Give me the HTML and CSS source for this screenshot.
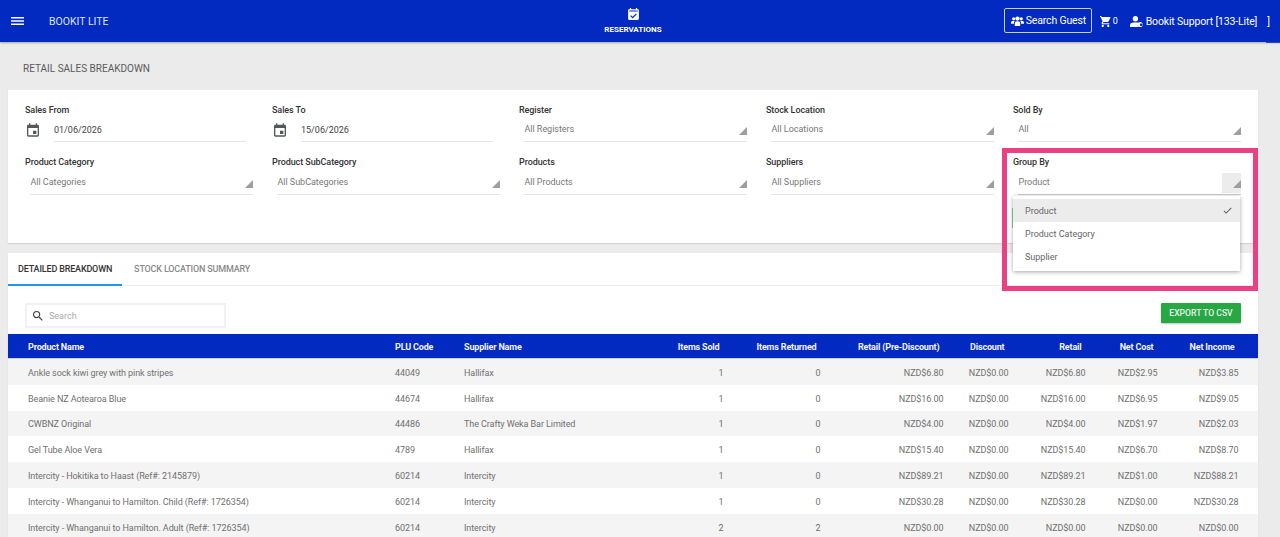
FILE: index.html
```html
<!DOCTYPE html>
<html>
    <head>
        <title>Retail Sales Breakdown - Bookit Lite</title>
        <link rel="stylesheet" href="styles.css">
    </head>

    <body>
        <div class="topBar">
            <div class="topLeft">
                <svg class="menuIcon" viewBox="0 0 13 8"><path d="M0 0h13v1.4H0zM0 3.3h13v1.4H0zM0 6.6h13V8H0z"/></svg>
                <span class="brand">BOOKIT LITE</span>
            </div>
            <div class="topCentre">
                <svg class="resIcon" viewBox="3 1 18 20"><path d="M19 3h-1V1h-2v2H8V1H6v2H5c-1.1 0-2 .9-2 2v14c0 1.1.9 2 2 2h14c1.1 0 2-.9 2-2V5c0-1.1-.9-2-2-2zm0 4H5V5h14zm-8.500 11.500l-4-4 1.400-1.400 2.600 2.600 5.600-5.600 1.400 1.400z"/></svg>
                <span>RESERVATIONS</span>
            </div>
            <div class="topRight">
                <div class="guestBtn">
                    <svg class="usersIcon" viewBox="0 0 24 18"><circle cx="5" cy="5" r="3"/><circle cx="19" cy="5" r="3"/><circle cx="12" cy="4.5" r="4"/><path d="M0 14v-2c0-2 1.500-3 3-3h4c-1 1-1.500 2-1.500 5zM24 14v-2c0-2-1.500-3-3-3h-4c1 1 1.500 2 1.500 5zM7 18v-4c0-3 2-4.500 4-4.500h2c2 0 4 1.500 4 4.500v4z"/></svg>
                    Search Guest
                </div>
                <svg class="cartIcon" viewBox="2 2 20 20"><path d="M7 18c-1.100 0-1.990.9-1.990 2S5.900 22 7 22s2-.9 2-2-.9-2-2-2zM1 2v2h2l3.600 7.590-1.350 2.450c-.16.280-.25.610-.25.960 0 1.100.9 2 2 2h12v-2H7.420c-.14 0-.25-.11-.25-.25l.03-.12.900-1.630h7.450c.75 0 1.410-.41 1.750-1.030l3.580-6.490A1 1 0 0 0 20 4H5.210l-.94-2zm16 16c-1.100 0-1.990.9-1.990 2s.89 2 1.990 2 2-.9 2-2-.9-2-2-2z"/></svg>
                <span class="cartCount">0</span>
                <svg class="userIcon" viewBox="0 0 26 20"><circle cx="10" cy="5" r="5"/><path d="M0 20v-3c0-3 3-5 6-5h8c1 0 2 .2 3 .7-1.500 1.200-2.500 3-2.500 4.800 0 .9.200 1.700.5 2.500z"/><path d="M21 11.500a5 5 0 1 0 0 8.900 5 5 0 0 0 0-8.900zm-1 2.200a2.400 2.400 0 1 1 0 4.600 2.400 2.400 0 0 1 0-4.600z"/></svg>
                <span class="userName">Bookit Support [133-Lite]</span>
                <span class="stray">]</span>
            </div>
        </div>

        <div class="pageTitle">RETAIL SALES BREAKDOWN</div>

        <div class="card filters">
            <div class="filterGrid">
                <div class="field">
                    <label>Sales From</label>
                    <div class="dateRow">
                        <svg class="calIcon" viewBox="3 1 18 20"><path d="M17 12h-5v5h5zM16 1v2H8V1H6v2H5c-1.110 0-1.990.9-1.990 2L3 19c0 1.100.89 2 2 2h14c1.100 0 2-.9 2-2V5c0-1.100-.9-2-2-2h-1V1zm3 18H5V8h14z"/></svg>
                        <div class="dateInput">01/06/2026</div>
                    </div>
                </div>
                <div class="field">
                    <label>Sales To</label>
                    <div class="dateRow">
                        <svg class="calIcon" viewBox="3 1 18 20"><path d="M17 12h-5v5h5zM16 1v2H8V1H6v2H5c-1.110 0-1.990.9-1.990 2L3 19c0 1.100.89 2 2 2h14c1.100 0 2-.9 2-2V5c0-1.100-.9-2-2-2h-1V1zm3 18H5V8h14z"/></svg>
                        <div class="dateInput">15/06/2026</div>
                    </div>
                </div>
                <div class="field">
                    <label>Register</label>
                    <div class="select">All Registers<i class="arrow"></i></div>
                </div>
                <div class="field">
                    <label>Stock Location</label>
                    <div class="select">All Locations<i class="arrow"></i></div>
                </div>
                <div class="field">
                    <label>Sold By</label>
                    <div class="select">All<i class="arrow"></i></div>
                </div>
                <div class="field">
                    <label>Product Category</label>
                    <div class="select">All Categories<i class="arrow"></i></div>
                </div>
                <div class="field">
                    <label>Product SubCategory</label>
                    <div class="select">All SubCategories<i class="arrow"></i></div>
                </div>
                <div class="field">
                    <label>Products</label>
                    <div class="select">All Products<i class="arrow"></i></div>
                </div>
                <div class="field">
                    <label>Suppliers</label>
                    <div class="select">All Suppliers<i class="arrow"></i></div>
                </div>
                <div class="field groupBy">
                    <label>Group By</label>
                    <div class="select open">Product<b class="arrowBack"></b><i class="arrow"></i></div>
                    <div class="dropMenu">
                        <div class="dropItem selected">Product
                            <svg class="checkIcon" viewBox="0 0 24 24"><path d="M9 16.170L4.830 12l-1.420 1.410L9 19 21 7l-1.410-1.410z"/></svg>
                        </div>
                        <div class="dropItem">Product Category</div>
                        <div class="dropItem">Supplier</div>
                    </div>
                </div>
            </div>
            <div class="filterActions"><button class="runBtn"></button></div>
        </div>

        <div class="card results">
            <div class="tabs">
                <div class="tab active">DETAILED BREAKDOWN</div>
                <div class="tab">STOCK LOCATION SUMMARY</div>
            </div>
            <div class="toolRow">
                <div class="searchBox">
                    <svg class="searchIcon" viewBox="3 3 18 18"><path d="M15.500 14h-.79l-.28-.27A6.470 6.470 0 0 0 16 9.500 6.500 6.500 0 1 0 9.500 16c1.610 0 3.090-.59 4.230-1.570l.27.28v.79l5 4.990L20.490 19zm-6 0C7.010 14 5 11.990 5 9.500S7.010 5 9.500 5 14 7.010 14 9.500 11.990 14 9.500 14z"/></svg>
                    Search
                </div>
                <button class="exportBtn">EXPORT TO CSV</button>
            </div>
            <table class="salesTable">
                <colgroup>
                    <col class="colName"><col class="colPlu"><col class="colSupplier"><col class="colSold"><col class="colReturned">
                    <col class="colPre"><col class="colDiscount"><col class="colRetail"><col class="colCost"><col class="colIncome">
                </colgroup>
                <thead>
                    <tr>
                        <th>Product Name</th><th>PLU Code</th><th>Supplier Name</th>
                        <th class="num">Items Sold</th><th class="num">Items Returned</th><th class="num">Retail (Pre-Discount)</th>
                        <th class="num">Discount</th><th class="num">Retail</th><th class="num">Net Cost</th><th class="num">Net Income</th>
                    </tr>
                </thead>
                <tbody>
                    <tr>
                        <td>Ankle sock kiwi grey with pink stripes</td><td>44049</td><td>Hallifax</td>
                        <td class="num">1</td><td class="num">0</td><td class="num">NZD$6.80</td><td class="num">NZD$0.00</td><td class="num">NZD$6.80</td><td class="num">NZD$2.95</td><td class="num">NZD$3.85</td>
                    </tr>
                    <tr>
                        <td>Beanie NZ Aotearoa Blue</td><td>44674</td><td>Hallifax</td>
                        <td class="num">1</td><td class="num">0</td><td class="num">NZD$16.00</td><td class="num">NZD$0.00</td><td class="num">NZD$16.00</td><td class="num">NZD$6.95</td><td class="num">NZD$9.05</td>
                    </tr>
                    <tr>
                        <td>CWBNZ Original</td><td>44486</td><td>The Crafty Weka Bar Limited</td>
                        <td class="num">1</td><td class="num">0</td><td class="num">NZD$4.00</td><td class="num">NZD$0.00</td><td class="num">NZD$4.00</td><td class="num">NZD$1.97</td><td class="num">NZD$2.03</td>
                    </tr>
                    <tr>
                        <td>Gel Tube Aloe Vera</td><td>4789</td><td>Hallifax</td>
                        <td class="num">1</td><td class="num">0</td><td class="num">NZD$15.40</td><td class="num">NZD$0.00</td><td class="num">NZD$15.40</td><td class="num">NZD$6.70</td><td class="num">NZD$8.70</td>
                    </tr>
                    <tr>
                        <td>Intercity - Hokitika to Haast (Ref#: 2145879)</td><td>60214</td><td>Intercity</td>
                        <td class="num">1</td><td class="num">0</td><td class="num">NZD$89.21</td><td class="num">NZD$0.00</td><td class="num">NZD$89.21</td><td class="num">NZD$1.00</td><td class="num">NZD$88.21</td>
                    </tr>
                    <tr>
                        <td>Intercity - Whanganui to Hamilton. Child (Ref#: 1726354)</td><td>60214</td><td>Intercity</td>
                        <td class="num">1</td><td class="num">0</td><td class="num">NZD$30.28</td><td class="num">NZD$0.00</td><td class="num">NZD$30.28</td><td class="num">NZD$0.00</td><td class="num">NZD$30.28</td>
                    </tr>
                    <tr>
                        <td>Intercity - Whanganui to Hamilton. Adult (Ref#: 1726354)</td><td>60214</td><td>Intercity</td>
                        <td class="num">2</td><td class="num">2</td><td class="num">NZD$0.00</td><td class="num">NZD$0.00</td><td class="num">NZD$0.00</td><td class="num">NZD$0.00</td><td class="num">NZD$0.00</td>
                    </tr>
                </tbody>
            </table>
        </div>

        <div class="highlightBox"></div>
    </body>
</html>
```

FILE: styles.css
```css
html, body {
    height: 100%;
    overflow: hidden;
}

body {
    margin: 0;
    position: relative;
    background-color: #ebebeb;
    font-family: Roboto, "Liberation Sans", sans-serif;
    color: #666666;
}

/* top bar */
.topBar {
    display: flex;
    align-items: center;
    position: relative;
    height: 42px;
    background-color: #0229c0;
    color: #ffffff;
    box-shadow: 0 1px 2px rgba(0, 0, 0, 0.3);
}

.topBar::after {
    content: "";
    position: absolute;
    right: 0;
    bottom: -1px;
    width: 14px;
    height: 1px;
    background-color: #2a48c0;
}

.topLeft {
    display: flex;
    align-items: center;
    flex: 1;
    padding-left: 11px;
}

.menuIcon {
    width: 13px;
    height: 8px;
    fill: #ffffff;
}

.brand {
    margin-left: 25px;
    font-size: 10.5px;
    color: #dfe5fb;
}

.topCentre {
    position: absolute;
    left: 604px;
    top: 8px;
    width: 58px;
    display: flex;
    flex-direction: column;
    align-items: center;
    font-size: 8px;
    font-weight: 700;
    white-space: nowrap;
}

.resIcon {
    width: 11px;
    height: 12px;
    margin-bottom: 4.5px;
    fill: #ffffff;
}

.topRight {
    display: flex;
    align-items: center;
    font-size: 10.5px;
}

.guestBtn {
    display: flex;
    align-items: center;
    width: 88px;
    height: 25px;
    box-sizing: border-box;
    margin-top: -1px;
    padding-left: 6px;
    border: 1px solid #c4cdf3;
    border-radius: 2px;
    letter-spacing: -0.15px;
    white-space: nowrap;
}

.usersIcon {
    width: 13px;
    height: 10px;
    margin-right: 2px;
    fill: #ffffff;
}

.cartIcon {
    width: 11px;
    height: 11px;
    margin-left: 8px;
    fill: #ffffff;
}

.cartCount {
    margin-left: 2px;
    font-size: 9px;
}

.userIcon {
    width: 14px;
    height: 11px;
    margin-left: 12px;
    fill: #ffffff;
}

.userName {
    margin-left: 2px;
    letter-spacing: -0.16px;
    white-space: nowrap;
}

.stray {
    margin-left: 10px;
    margin-right: 10px;
}

.pageTitle {
    padding: 21px 0 0 23px;
    height: 27px;
    font-size: 10px;
    line-height: 12px;
    color: #5a5a5a;
}

/* cards */
.card {
    margin: 0 22px 10px 8px;
    background-color: #ffffff;
    box-shadow: 0 1px 1px rgba(0, 0, 0, 0.1);
}

.filters {
    height: 153px;
    box-sizing: border-box;
    padding: 14px 17px 0 17px;
}

.filterGrid {
    display: grid;
    grid-template-columns: repeat(5, 247px);
    grid-auto-rows: 52px;
}

.field {
    position: relative;
}

.field label {
    display: block;
    height: 14px;
    font-size: 9px;
    font-weight: 500;
    line-height: 12px;
    letter-spacing: -0.08px;
    color: #333333;
}

/* second row sits a pixel lower under its label */
.field:nth-child(n+6) label {
    height: 15px;
}

.dateRow {
    display: flex;
    align-items: center;
}

.calIcon {
    width: 12px;
    height: 14px;
    margin: 0 15px 0 2px;
    fill: #55585c;
}

.dateInput {
    width: 192px;
    height: 24px;
    box-sizing: border-box;
    padding-top: 7px;
    border-bottom: 1px solid #e6e6e6;
    font-size: 9px;
    color: #444444;
}

.select {
    position: relative;
    width: 223px;
    height: 24px;
    box-sizing: border-box;
    margin-left: 5px;
    padding: 6px 0 0 0.5px;
    border-bottom: 1px solid #e6e6e6;
    font-size: 9px;
    letter-spacing: -0.03px;
    color: #777777;
}

.arrow {
    position: absolute;
    right: 0;
    bottom: 6px;
    width: 8px;
    height: 8px;
    background-color: #9e9e9e;
    clip-path: polygon(100% 0, 100% 100%, 0 100%);
}

.select.open {
    border-bottom-color: #cccccc;
}

.arrowBack {
    position: absolute;
    right: 0;
    bottom: 1px;
    width: 19px;
    height: 20px;
    background-color: #ececec;
}

.dropMenu {
    position: absolute;
    left: 0;
    top: 40px;
    z-index: 3;
    width: 226.5px;
    padding: 3px 0;
    background-color: #ffffff;
    box-shadow: 0 1px 4px rgba(0, 0, 0, 0.35);
}

.dropItem {
    display: flex;
    align-items: center;
    justify-content: space-between;
    height: 23px;
    padding: 0 7px 0 12px;
    font-size: 9px;
    color: #666666;
}

.dropItem.selected {
    background-color: #ececec;
}

.checkIcon {
    width: 11px;
    height: 11px;
    fill: #555555;
}

.filterActions {
    display: flex;
    justify-content: flex-end;
    padding-right: 2px;
}

.runBtn {
    width: 227px;
    height: 20px;
    padding: 0;
    border: none;
    background-color: #8fcf9f;
}

/* results */
.tabs {
    display: flex;
    height: 32px;
    border-bottom: 1px solid #ededed;
}

.tab {
    padding: 0 10px;
    height: 32px;
    box-sizing: border-box;
    margin-right: 2px;
    font-size: 9px;
    font-weight: 500;
    line-height: 33px;
    letter-spacing: -0.17px;
    color: #8a8a8a;
}

.tab.active {
    border-bottom: 2px solid #2196f3;
    height: 33px;
    color: #333333;
}

.toolRow {
    display: flex;
    justify-content: space-between;
    align-items: flex-start;
    height: 48px;
    box-sizing: border-box;
    padding: 17px 17px 0 16.5px;
}

.searchBox {
    display: flex;
    align-items: center;
    width: 201px;
    height: 25px;
    box-sizing: border-box;
    padding-left: 6px;
    border: 2px solid #f1f1f1;
    font-size: 9px;
    color: #aaaaaa;
}

.searchIcon {
    width: 10px;
    height: 10px;
    margin-right: 6.5px;
    fill: #444444;
}

.exportBtn {
    width: 80px;
    height: 20px;
    padding: 0;
    border: none;
    border-radius: 1px;
    background-color: #28a745;
    box-shadow: 0 1px 2px rgba(0, 0, 0, 0.25);
    font-family: Roboto, "Liberation Sans", sans-serif;
    font-size: 8.6px;
    font-weight: 500;
    color: #e6f6ea;
}

.salesTable {
    width: 1250px;
    table-layout: fixed;
    border-collapse: collapse;
    font-size: 9px;
}

.colName { width: 367px; }
.colPlu { width: 69px; }
.colSupplier { width: 200px; }
.colSold { width: 99px; }
.colReturned { width: 97px; }
.colPre { width: 123px; }
.colDiscount { width: 65px; }
.colRetail { width: 77px; }
.colCost { width: 72px; }
.colIncome { width: 81px; }

.salesTable th {
    height: 22px;
    padding: 2px 0 0 20px;
    background-color: #0229c0;
    border-bottom: 1px solid #c9d2f2;
    font-weight: 700;
    letter-spacing: -0.16px;
    text-align: left;
    color: #f2f4fd;
    white-space: nowrap;
}

.salesTable td {
    height: 23.8px;
    padding: 2px 0 0 20px;
    letter-spacing: -0.08px;
    color: #707070;
    white-space: nowrap;
}

.salesTable th.num {
    padding: 2px 23.5px 0 0;
    text-align: right;
}

.salesTable td.num {
    padding: 2px 19.5px 0 0;
    text-align: right;
}

.salesTable tbody tr:nth-child(odd) {
    background-color: #f4f4f4;
}

/* annotation round the Group By field */
.highlightBox {
    position: absolute;
    left: 1002px;
    top: 148px;
    z-index: 4;
    width: 256px;
    height: 143px;
    box-sizing: border-box;
    border: 5px solid #ec4085;
}
```
